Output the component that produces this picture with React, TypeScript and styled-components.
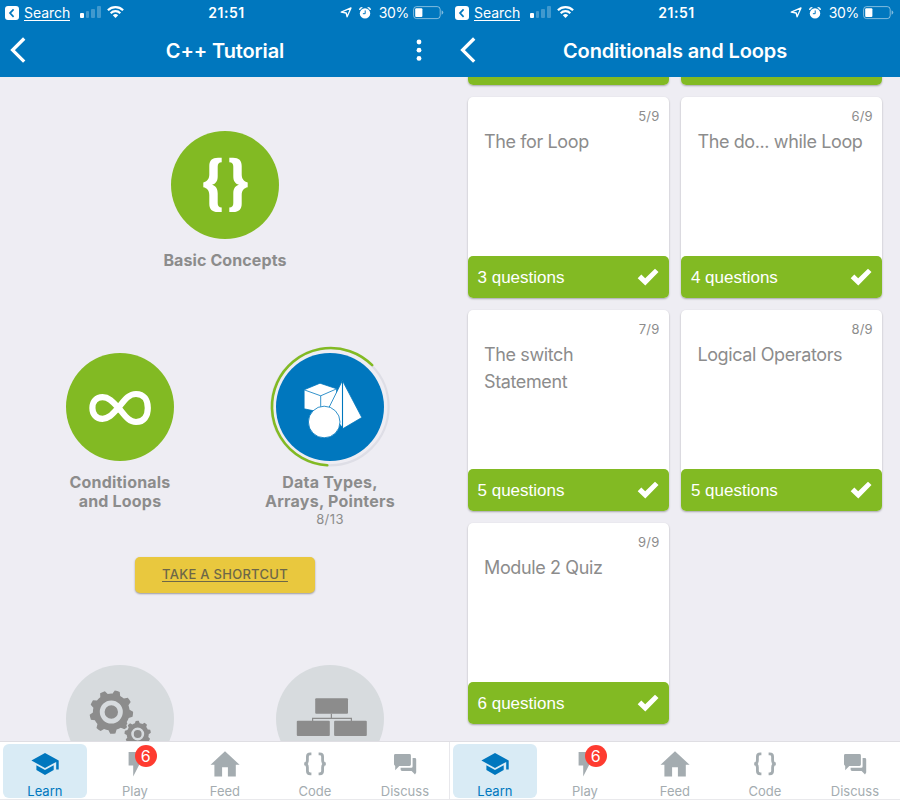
import React from 'react';
import styled, { createGlobalStyle } from 'styled-components';

const BLUE = '#0077be';
const GREEN = '#82ba23';
const GREY = '#8c8c8c';
const TAB_GREY = '#a4acb0';

const GlobalStyle = createGlobalStyle`
  *, *::before, *::after { box-sizing: border-box; }
  body {
    margin: 0;
    font-family: Inter, "Liberation Sans", sans-serif;
    background: #eeedf3;
  }
  svg { display: block; flex: none; }
`;

const Screens = styled.div`
  display: flex;
  width: 900px;
  height: 800px;
  overflow: hidden;
`;

const Phone = styled.section`
  display: flex;
  flex-direction: column;
  width: 450px;
  height: 800px;
  background: #eeedf3;
`;

const StatusBar = styled.div`
  display: grid;
  grid-template-columns: 1fr auto 1fr;
  align-items: center;
  height: 25px;
  flex: none;
  padding: 0 6px 0 5px;
  background: ${BLUE};
  color: #fff;
  font-size: 14px;
  line-height: 24px;
`;

const StatusLeft = styled.div`
  display: flex;
  align-items: center;
`;

const StatusRight = styled(StatusLeft)`
  justify-content: flex-end;
`;

const BackTo = styled.span`
  margin: 1px 10px 0 5px;
  line-height: 15px;
  letter-spacing: -0.05px;
  border-bottom: 1px solid #fff;
`;

const Clock = styled.span`
  padding: 1px 0 0 4px;
  font-weight: 600;
  letter-spacing: 0.5px;
`;

const Battery = styled.span`
  margin: 1px 4px 0 8px;
  letter-spacing: -0.3px;
`;

const StatusIcons = styled.div`
  display: flex;
  gap: 7px;
`;

const Signal = styled.div`
  display: flex;
  align-items: flex-end;
  gap: 2px;
  height: 12px;
  margin: 0 6px 1px 0;
`;

const SignalBar = styled.i<{ $h: number; $on?: boolean }>`
  width: 3.6px;
  height: ${(p) => p.$h}px;
  border-radius: 1px;
  background: ${(p) => (p.$on ? '#fff' : 'rgba(255,255,255,0.25)')};
`;

const NavBar = styled.header`
  display: grid;
  grid-template-columns: 40px 1fr 40px;
  align-items: center;
  height: 52px;
  flex: none;
  padding: 0 0 2px;
  background: ${BLUE};
  color: #fff;
`;

const NavTitle = styled.h1`
  margin: 0;
  padding-top: 1px;
  text-align: center;
  font-size: 20px;
  font-weight: 600;
  line-height: 24px;
  letter-spacing: -0.12px;
`;

const Tree = styled.main`
  display: flex;
  flex-direction: column;
  align-items: center;
  flex: 1;
  min-height: 0;
  overflow: hidden;
  padding-top: 54px;
`;

const TreeRow = styled.div<{ $h: number }>`
  display: flex;
  justify-content: center;
  flex: none;
  height: ${(p) => p.$h}px;
`;

const Module = styled.div`
  display: flex;
  flex-direction: column;
  align-items: center;
  width: 210px;
`;

const Disc = styled.div<{ $color: string }>`
  display: flex;
  align-items: center;
  justify-content: center;
  width: 108px;
  height: 108px;
  flex: none;
  border-radius: 50%;
  background: ${(p) => p.$color};
  svg { overflow: visible; }
`;

const ModuleName = styled.div<{ $tracking?: number }>`
  margin-top: 12px;
  text-align: center;
  white-space: pre-line;
  font-size: 16px;
  font-weight: 700;
  line-height: 18.5px;
  letter-spacing: ${(p) => p.$tracking ?? 0.1}px;
  color: ${GREY};
`;

const ModuleProgress = styled.div`
  padding-top: 1px;
  font-size: 13px;
  line-height: 17px;
  letter-spacing: 0.4px;
  color: ${GREY};
`;

const Shortcut = styled.button`
  flex: none;
  width: 180px;
  height: 36px;
  margin-bottom: 72px;
  padding: 0 0 1px;
  border: 0;
  border-radius: 5px;
  background: #e9c83e;
  box-shadow: 0 1px 2px rgba(0, 0, 0, 0.35);
  font: 500 13px/20px Inter, sans-serif;
  letter-spacing: 0.28px;
  color: #6d6748;
  text-decoration: underline;
  text-decoration-thickness: 1px;
  text-underline-offset: 2px;
  text-decoration-skip-ink: none;
`;

const CardGrid = styled.main`
  display: grid;
  grid-template-columns: 201px 201px;
  grid-auto-rows: 201px;
  gap: 12px 12.4px;
  align-content: end;
  flex: 1;
  min-height: 0;
  overflow: hidden;
  padding: 0 17.5px 17.3px 18px;
`;

const Card = styled.article`
  display: flex;
  flex-direction: column;
  border-radius: 5px;
  background: #fff;
  box-shadow: 0 1px 2px rgba(0, 0, 0, 0.3);
`;

const CardCount = styled.div`
  padding: 11px 9.5px 0 0;
  height: 30px;
  text-align: right;
  font-size: 13px;
  line-height: 16px;
  letter-spacing: 0.2px;
  color: ${GREY};
`;

const CardTitle = styled.h2`
  flex: 1;
  margin: 0;
  padding: 1px 16px 0;
  font-size: 18px;
  font-weight: 400;
  line-height: 27px;
  letter-spacing: -0.38px;
  color: ${GREY};
`;

const CardFooter = styled.div`
  display: flex;
  align-items: center;
  justify-content: space-between;
  height: 42px;
  padding: 0 10px 0 9.5px;
  border-radius: 5px;
  background: ${GREEN};
  color: #fff;
  font: 17px/20px "Liberation Sans", Arial, sans-serif;
`;

const QuestionCount = styled.span`
  padding-top: 2px;
`;

const TabBar = styled.nav<{ $divided?: boolean }>`
  display: grid;
  grid-template-columns: repeat(5, 90px);
  height: 59px;
  flex: none;
  overflow: hidden;
  padding: 2px 0;
  border-top: 1px solid #dfdee3;
  border-bottom: 1px solid #e9e9ec;
  box-shadow: ${(p) => (p.$divided ? 'inset -1px 0 #e8e8ec' : 'none')};
  background-color: #fff;
`;

const Tab = styled.a<{ $active?: boolean }>`
  position: relative;
  display: flex;
  flex-direction: column;
  align-items: center;
  width: 84.6px;
  height: 54px;
  margin-left: 2.6px;
  padding-top: 6px;
  border-radius: 6px;
  background: ${(p) => (p.$active ? '#d9ebf5' : 'transparent')};
  color: ${(p) => (p.$active ? BLUE : TAB_GREY)};
  font-size: 13px;
  line-height: 15px;
`;

const TabLabel = styled.span`
  padding-top: 6px;
`;

const Badge = styled.span`
  position: absolute;
  top: 1px;
  left: 42.2px;
  width: 22px;
  height: 22px;
  border-radius: 50%;
  background: #fe3b30;
  color: #fff;
  text-align: center;
  font-size: 16px;
  line-height: 22px;
`;

/* Outline of a gear wheel with rounded shoulders between its teeth. */
function gear(cx: number, cy: number, outer: number, root: number, teeth: number, start: number) {
  const at = (r: number, deg: number) => {
    const a = (deg * Math.PI) / 180;
    return `${(cx + r * Math.cos(a)).toFixed(2)} ${(cy + r * Math.sin(a)).toFixed(2)}`;
  };
  const step = 360 / teeth;
  let d = '';
  for (let i = 0; i < teeth; i++) {
    const c = start + i * step;
    d += `${i ? 'L' : 'M'}${at(root, c - step * 0.32)}L${at(outer, c - step * 0.17)}`;
    d += `A${outer} ${outer} 0 0 1 ${at(outer, c + step * 0.17)}L${at(root, c + step * 0.32)}`;
    d += `A${root} ${root} 0 0 1 ${at(root, c + step * 0.68)}`;
  }
  return d + 'Z';
}

const BRACE =
  'M50.7 26.7H47C41 26.7 38.3 29.5 38.3 35V43.5C38.3 48 36 50.7 32.3 51.4V56.3C36 57 38.3 59.7 38.3 64.2V72.7C38.3 78.2 41 81 47 81H50.7V76.5C47.8 76.3 46.7 75 46.7 72V62.5C46.7 57.8 45 55.2 41 53.85C45 52.5 46.7 49.9 46.7 45.2V35.7C46.7 32.7 47.8 31.4 50.7 31.2Z';

const BracesArt = () => (
  <svg width="108" height="108" viewBox="0 0 108 108" fill="#fff">
    <path d={BRACE} />
    <path d={BRACE} transform="matrix(-1 0 0 1 109 0)" />
  </svg>
);

/* The right loop of the sign is larger than the left one. */
const InfinityArt = () => (
  <svg width="108" height="108" viewBox="0 0 108 108" fill="none" stroke="#fff" strokeWidth="6.2">
    <path d="M52.3 54.7C47 60.5 43 65.8 36.5 65.8C30.5 65.8 26.4 61.5 26.4 55C26.4 48.5 30.5 44.2 36.5 44.2C43 44.2 47 49 52.3 54.7C58 61 62 69 70 69C78 69 81.8 63 81.8 55C81.8 47 78 41 70 41C62 41 58 48 52.3 54.7Z" />
  </svg>
);

const ShapesArt = () => (
  <svg width="120" height="120" viewBox="-6 -6 120 120">
    <circle cx="54" cy="53.7" r="58.6" fill="none" stroke="#dedee6" strokeWidth="2.2" />
    <path
      d="M96.2 12.2A58.7 58.7 0 1 0 51.3 112.3"
      fill="none"
      stroke={GREEN}
      strokeWidth="2.6"
      strokeLinecap="round"
    />
    <g fill="#fff" stroke={BLUE} strokeWidth="0.8" strokeLinejoin="round">
      <path d="M44 30.2L60.7 35.8L60 57L44.7 59.3L28.1 55.8V36.8Z" />
      <path d="M28.1 36.8L44.7 42.8L60.7 35.8M44.7 42.8V59" fill="none" />
      <path d="M66.4 27.6L85.8 64.5L67 75.6L52.5 55.5Z" />
      <path d="M66.5 28V75.4" fill="none" strokeWidth="1.1" />
      <circle cx="48.2" cy="69" r="15.8" />
    </g>
  </svg>
);

const GearsArt = () => (
  <svg width="108" height="108" viewBox="0 0 108 108" fill={GREY}>
    <path d={gear(45.3, 47, 21.8, 18.4, 9, -74)} />
    <circle cx="45.3" cy="47" r="9.1" fill={GREY} stroke="#d7dbde" strokeWidth="4.8" />
    <path d={gear(71.7, 69, 13.2, 11, 9, -92)} stroke="#d7dbde" strokeWidth="2.6" paintOrder="stroke" />
    <circle cx="71.7" cy="69" r="5.2" fill={GREY} stroke="#d7dbde" strokeWidth="2.6" />
  </svg>
);

const HierarchyArt = () => (
  <svg width="108" height="108" viewBox="0 0 108 108" fill={GREY}>
    <rect x="39.2" y="33.2" width="32.8" height="15.6" rx="1" />
    <rect x="20.8" y="55.7" width="33" height="15.3" rx="1" />
    <rect x="58.1" y="55.7" width="32.7" height="15.3" rx="1" />
    <path d="M55.4 48.8V53.4M36.6 56V53.4H75.4V56" fill="none" stroke={GREY} strokeWidth="1.2" />
  </svg>
);

const ReturnIcon = () => (
  <svg width="14" height="14" viewBox="0 0 14 14">
    <rect width="14" height="14" rx="3" fill="#fff" />
    <path d="M8.6 3.4L5 7.1L8.6 10.8" fill="none" stroke={BLUE} strokeWidth="1.7" />
  </svg>
);

const WifiIcon = () => (
  <svg width="17" height="13" viewBox="0 0 17 13" fill="none" stroke="#fff" strokeWidth="2.2">
    <path d="M0.9 4.3A10.8 10.8 0 0 1 16.1 4.3" />
    <path d="M3.7 7.2A6.8 6.8 0 0 1 13.3 7.2" />
    <path d="M8.5 12L5.8 9.2A3.9 3.9 0 0 1 11.2 9.2Z" fill="#fff" stroke="none" />
  </svg>
);

const LocationIcon = () => (
  <svg width="12" height="12" viewBox="0 0 12 12" fill="none" stroke="#fff" strokeWidth="1.3" strokeLinejoin="round">
    <path d="M11 0.9L7.1 9.8L6.2 6L1.2 5.2Z" />
  </svg>
);

const AlarmIcon = () => (
  <svg width="12" height="12" viewBox="0 0 12 12">
    <circle cx="6" cy="6.4" r="5.2" fill="#fff" />
    <path d="M0.7 3A2.6 2.6 0 0 1 3.4 0.7M11.3 3A2.6 2.6 0 0 0 8.6 0.7" stroke="#fff" strokeWidth="1.3" fill="none" />
    <path d="M6.2 3.4V6.7H3.9" stroke={BLUE} strokeWidth="1" fill="none" />
  </svg>
);

const BatteryIcon = () => (
  <svg width="31" height="14" viewBox="0 0 31 14">
    <rect x="0.6" y="0.6" width="26.6" height="12" rx="3" fill="none" stroke="rgba(255,255,255,0.5)" strokeWidth="1" />
    <path d="M28.6 4.3Q30.3 5 30.3 6.5T28.6 8.7Z" fill="rgba(255,255,255,0.5)" />
    <rect x="2.2" y="2.2" width="7.2" height="8.8" rx="1" fill="#fff" />
  </svg>
);

const BackIcon = () => (
  <svg width="40" height="28" viewBox="0 0 40 28" fill="none" stroke="#fff" strokeWidth="3.3">
    <path d="M24.2 2.5L12.6 14.1L24.2 25.7" />
  </svg>
);

const MoreIcon = () => (
  <svg width="18" height="24" viewBox="0 0 18 24" fill="#fff">
    <circle cx="9" cy="4" r="2.4" />
    <circle cx="9" cy="12.2" r="2.4" />
    <circle cx="9" cy="20.4" r="2.4" />
  </svg>
);

const CheckIcon = () => (
  <svg width="22" height="18" viewBox="0 0 22 18" fill="#fff">
    <path d="M0.7 10.3L4.3 6.6L8.2 10.2L18 0.7L21.5 4L8.3 17.5Z" />
  </svg>
);

const LearnIcon = () => (
  <svg width="28" height="28" viewBox="0 0 28 28" fill="currentColor">
    <path d="M14 3L27.7 10.5V19.6H25.2V11.9L14 18L0.4 10.5Z" />
    <path d="M5.4 15.2V20L14 24.9L22.7 20V15.2L14 20Z" />
  </svg>
);

const PlayIcon = () => (
  <svg width="28" height="28" viewBox="0 0 28 28" fill="currentColor">
    <path d="M7.6 2H20L16.6 11.3H20L12.2 26.4V15.6H7.6Z" />
  </svg>
);

const FeedIcon = () => (
  <svg width="30" height="28" viewBox="0 0 30 28" fill="currentColor">
    <path d="M15 1.2L29.6 14.8H25.8V26.6H17.9V17.3H12.1V26.6H4.4V14.8H0.5Z" />
  </svg>
);

const CodeIcon = () => (
  <svg width="28" height="28" viewBox="0 0 28 28" fill="none" stroke="currentColor" strokeWidth="2.8">
    <path d="M10.4 3.9H9.3Q6.4 3.9 6.4 6.7V10.3Q6.4 13.9 3.2 13.9Q6.4 13.9 6.4 17.5V21.1Q6.4 23.9 9.3 23.9H10.4" />
    <path d="M17.6 3.9H18.7Q21.6 3.9 21.6 6.7V10.3Q21.6 13.9 24.8 13.9Q21.6 13.9 21.6 17.5V21.1Q21.6 23.9 18.7 23.9H17.6" />
  </svg>
);

const DiscussIcon = () => (
  <svg width="28" height="28" viewBox="0 0 28 28" fill="currentColor">
    <path d="M4.4 4H18.5Q19.9 4 19.9 5.4V14.6Q19.9 16 18.5 16H8.3L4.2 20.2V16L3 14.6V5.4Q3 4 4.4 4Z" />
    <path d="M21.6 8H23.8Q25.2 8 25.2 9.4V22.4L24 24.4L20.6 21H11Q9.6 21 9.6 19.6V17.8H20.2Q21.6 17.8 21.6 16.4Z" />
  </svg>
);

function Header({ title, menu }: { title: string; menu?: boolean }) {
  return (
    <>
      <StatusBar>
        <StatusLeft>
          <ReturnIcon />
          <BackTo>Search</BackTo>
          <Signal>
            <SignalBar $h={5} $on />
            <SignalBar $h={7} />
            <SignalBar $h={9.5} />
            <SignalBar $h={12} />
          </Signal>
          <WifiIcon />
        </StatusLeft>
        <Clock>21:51</Clock>
        <StatusRight>
          <StatusIcons>
            <LocationIcon />
            <AlarmIcon />
          </StatusIcons>
          <Battery>30%</Battery>
          <BatteryIcon />
        </StatusRight>
      </StatusBar>
      <NavBar>
        <BackIcon />
        <NavTitle>{title}</NavTitle>
        {menu && <MoreIcon />}
      </NavBar>
    </>
  );
}

const TABS = [
  { label: 'Learn', Icon: LearnIcon },
  { label: 'Play', Icon: PlayIcon, badge: 6 },
  { label: 'Feed', Icon: FeedIcon },
  { label: 'Code', Icon: CodeIcon },
  { label: 'Discuss', Icon: DiscussIcon },
];

function Tabs({ divided }: { divided?: boolean }) {
  return (
    <TabBar $divided={divided}>
      {TABS.map(({ label, Icon, badge }, i) => (
        <Tab key={label} $active={i === 0}>
          <Icon />
          <TabLabel>{label}</TabLabel>
          {badge && <Badge>{badge}</Badge>}
        </Tab>
      ))}
    </TabBar>
  );
}

const LESSONS = [
  { title: 'The for Loop', questions: 3 },
  { title: 'The do... while Loop', questions: 4 },
  { title: 'The switch Statement', questions: 5 },
  { title: 'Logical Operators', questions: 5 },
  { title: 'Module 2 Quiz', questions: 6 },
];

export default function App() {
  return (
    <>
      <GlobalStyle />
      <Screens>
        <Phone>
          <Header title="C++ Tutorial" menu />
          <Tree>
            <TreeRow $h={222}>
              <Module>
                <Disc $color={GREEN}><BracesArt /></Disc>
                <ModuleName>Basic Concepts</ModuleName>
              </Module>
            </TreeRow>
            <TreeRow $h={203.5}>
              <Module>
                <Disc $color={GREEN}><InfinityArt /></Disc>
                <ModuleName $tracking={0.2}>{'Conditionals\nand Loops'}</ModuleName>
              </Module>
              <Module>
                <Disc $color={BLUE}><ShapesArt /></Disc>
                <ModuleName $tracking={0.24}>{'Data Types,\nArrays, Pointers'}</ModuleName>
                <ModuleProgress>8/13</ModuleProgress>
              </Module>
            </TreeRow>
            <Shortcut>TAKE A SHORTCUT</Shortcut>
            <TreeRow $h={108}>
              <Module>
                <Disc $color="#d7dbde"><GearsArt /></Disc>
              </Module>
              <Module>
                <Disc $color="#d7dbde"><HierarchyArt /></Disc>
              </Module>
            </TreeRow>
          </Tree>
          <Tabs divided />
        </Phone>
        <Phone>
          <Header title="Conditionals and Loops" />
          <CardGrid>
            {[3, 4].map((n) => (
              <Card key={n}>
                <CardTitle />
                <CardFooter />
              </Card>
            ))}
            {LESSONS.map((lesson, i) => (
              <Card key={lesson.title}>
                <CardCount>{i + 5}/9</CardCount>
                <CardTitle>{lesson.title}</CardTitle>
                <CardFooter>
                  <QuestionCount>{lesson.questions} questions</QuestionCount>
                  <CheckIcon />
                </CardFooter>
              </Card>
            ))}
          </CardGrid>
          <Tabs />
        </Phone>
      </Screens>
    </>
  );
}
